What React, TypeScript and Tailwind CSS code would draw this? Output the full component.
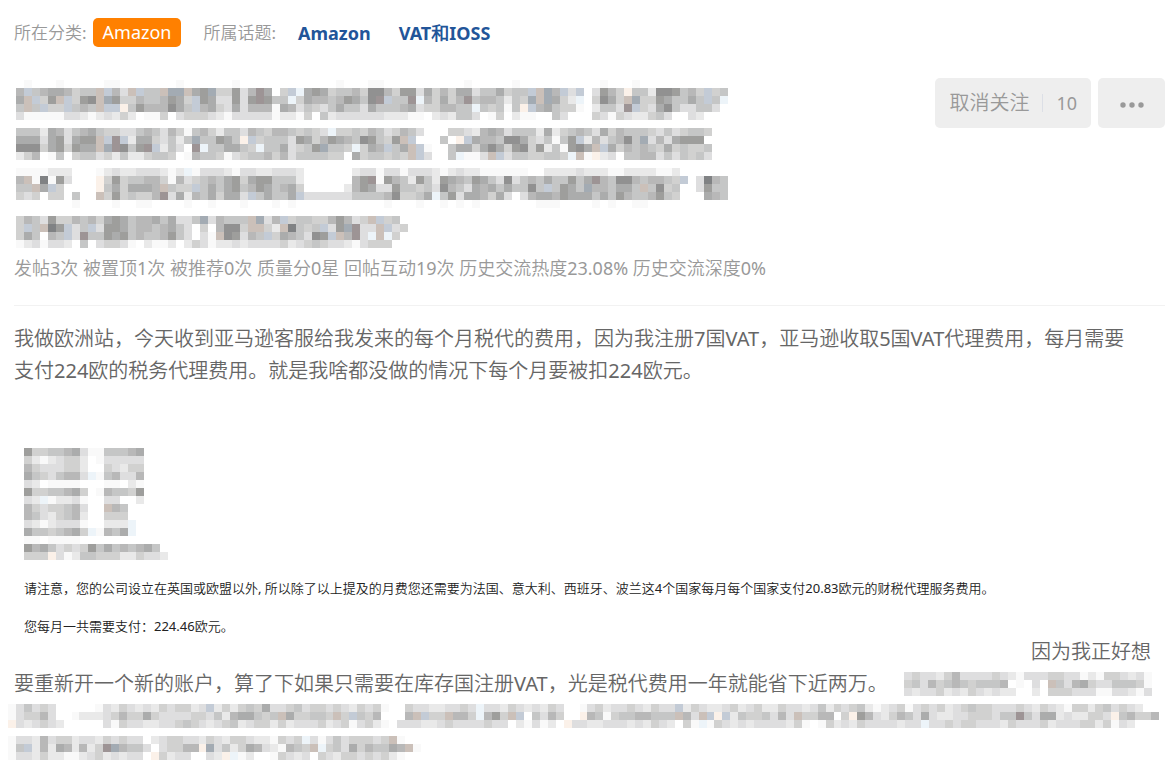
import React from "react";

// One character per 8px cell, "." leaves the cell empty
const TONES: Record<string, string> = {
  "0": "#808284",
  "1": "#919191",
  "2": "#9e9e9c",
  "3": "#abacac",
  "4": "#b8b8b8",
  "5": "#c5c6c6",
  "6": "#d1d1d0",
  "7": "#dededf",
  "8": "#e9e9e9",
  "9": "#f9f9f9",
  b: "#c3cbd6",
  B: "#a3abb3",
  r: "#cbc0b9",
  R: "#9d9495",
  c: "#edf4f9",
  w: "#fbf1e9",
};

const TITLE_ROWS = [
  ".9...9.....99.......9......9............9...99..........9.....9..........9...9",
  "4b54334655rb47rb55rBBr32B66274R3.6bc3236554611462273646337553655brB4b7b.7246w558112546b65",
  "3rb62rb621rB2664554236b2377272R255c6344542351Rb55Rc46364R5445856BrB368c.6136rB66235535b5c",
  "5r5b66b545rbbw52444135b4367374449347567535573555437664455c56595wb435669.8557Rb6731577557",
  "799999778987868.996.76667897777798896.5877777788899.878557.96.899..57...679678865 7..78",
  "",
  "555834754356677545746954685574564456567c66564576457...66784347555838654573645556757655 6",
  "3337327322rbRb83367585B55235wb655572364234512562rb...5.wb3445113675952b8475415B7473222",
  "1116326233rBR152Rb857.Rc553356c5537652B556c634b53rb9..533631362162859213rb3645456365665",
  "864.95.65576858865 56.94556976554647555566.3655656rb7..5c997rb75566556cr9w87.55447575657",
  "",
  "9999888...98788777898c97778977887778......8779779777898788999999..88887888998888998",
  "4r90927...w6265544694765453263225558......42R92458258234523571754535 5253R4511454456b.7045",
  "55r3b6....w5363334r566b5353254235436.....842377255657145734353551 5b5235B445335r5165..7255",
  "676.66.5..r6265664R7384536337b5355 3b7777775555416653c527334637.7433423335352455425 6...345",
  ".......9....9..99....9..9...9...9.9...........9...9..9.9.9.......999....9.9..99",
  "",
  "64572664546323544353775B74555rB74b6556642476rb65",
  "6b5r02b75b722354454357.6.4116rr68r0565b72BR77rb76",
  "635.45b7R5523254554257.79r12745b6345712br4R7crc6",
  "9879778.5.76679.8998.8679887877776876567789766 6",
];

const STATEMENT_ROWS = [
  "266554379955543",
  "68987668.977777",
  "46777668..67866",
  "35675447c954774",
  "78.9999...99.89",
  "26655436.945562",
  "78c98879..77..8",
  "46766547..r45",
  "45786548..666",
  "78987779..888c",
  "35565436c9453c",
  "99.9999",
  "24357676253545435",
  "666w79855666886778",
];

const ASIDE_ROWS = [
  "7677864777767897776677989667879",
  "6574654565554.9.7.r574367755569",
  "78776878678788..8.6667779977897",
];

const CLOSING_ROWS = [
  "975767.....97867878676687b8686563776576676786769..677887767c7786787867..97687767867 7b8678876876886778758676589876976768765667776786789668657678",
  "976647..98887646636777766758433565r36655 6r6b564...4rb66r446c426rb.5746..w4596554455 5r47rbwb85665747r6644.6w247864573788776667 55R57338788667w54664",
  "w787678.....7967788776567876587668687776876976 89.77788767777677.8979 8.w7788777878678.69c9678787777869.9687867777877c7767667778677768777668 6978",
  "",
  "97784766877867677.8766778678667889676c7975766676r9",
  "95b848348486RB4557.7664 4wB758634789456rc6573645534r9",
  "97786889987687877.w6877..78wc98..96787.67866767689",
];

const CELL = 8;

type MosaicProps = {
  rows: string[];
  label: string;
  className?: string;
};

function Mosaic({ rows, label, className = "" }: MosaicProps) {
  const cells = rows.map((row) => row.replace(/ /g, "").split(""));
  const width = Math.max(...cells.map((row) => row.length)) * CELL;
  const height = cells.length * CELL;

  return (
    <svg
      role="img"
      aria-label={label}
      width={width}
      height={height}
      viewBox={`0 0 ${width} ${height}`}
      shapeRendering="crispEdges"
      className={`block h-auto max-w-full ${className}`}
    >
      {cells.map((row, y) =>
        row.map((tone, x) =>
          tone === "." ? null : (
            <rect
              key={`${x}-${y}`}
              x={x * CELL}
              y={y * CELL}
              width={CELL}
              height={CELL}
              fill={TONES[tone]}
            />
          )
        )
      )}
    </svg>
  );
}

function TopicBar() {
  return (
    <nav className="flex flex-wrap items-center text-lg leading-7 text-[#999]">
      <span className="text-[17px]">所在分类:</span>
      <a
        href="#amazon"
        className="ml-[6px] rounded-[5px] bg-[#ff8000] px-[10px] pb-px text-white"
      >
        Amazon
      </a>
      <span className="ml-[22px] text-[17px]">所属话题:</span>
      <a href="#topic-amazon" className="ml-[22px] font-bold text-[#225599]">
        Amazon
      </a>
      <a href="#topic-vat" className="ml-7 font-bold text-[#225599]">
        VAT和IOSS
      </a>
    </nav>
  );
}

function PostActions() {
  return (
    <div className="flex shrink-0 gap-[7px] text-[#999]">
      <button
        type="button"
        className="flex h-[50px] items-center rounded-[5px] bg-[#eee] px-[14px] text-xl"
      >
        取消关注
        <span className="mx-[13px] h-[18px] w-px bg-[#dcdfe6]" />
        <span className="text-lg">10</span>
      </button>
      <button
        type="button"
        aria-label="更多"
        className="flex h-[50px] w-[67px] items-center justify-center rounded-[5px] bg-[#eee] pt-1"
      >
        <svg width="24" height="6" viewBox="0 0 24 6" fill="currentColor">
          <circle cx="3" cy="3" r="2.7" />
          <circle cx="12" cy="3" r="2.7" />
          <circle cx="21" cy="3" r="2.7" />
        </svg>
      </button>
    </div>
  );
}

export default function App() {
  return (
    <main className="bg-white pt-[18px] pr-[11px] pb-3 pl-[14px] font-['Noto_Sans','Noto_Sans_CJK_SC_DemiLight','Noto_Sans_CJK_SC',sans-serif]">
      <TopicBar />

      {/* Title */}
      <header className="mt-[31px] border-b border-[#f2f2f2] pb-[25px]">
        <div className="flex items-start justify-between gap-4">
          <h1 className="min-w-0 pt-[2px] pl-[2px]">
            <Mosaic rows={TITLE_ROWS} label="标题已打码" />
          </h1>
          <PostActions />
        </div>
        <p className="mt-2 text-lg leading-6 text-[#999]">
          发帖3次 被置顶1次 被推荐0次 质量分0星 回帖互动19次
          历史交流热度23.08% 历史交流深度0%
        </p>
      </header>

      {/* Post body */}
      <article className="pt-[17px] text-xl leading-8 text-[#666]">
        <p className="pr-7">
          我做欧洲站，今天收到亚马逊客服给我发来的每个月税代的费用，因为我注册7国VAT，亚马逊收取5国VAT代理费用，每月需要支付224欧的税务代理费用。就是我啥都没做的情况下每个月要被扣224欧元。
        </p>

        <div className="mt-[61px] flex items-end justify-between pr-[14px]">
          <div className="pb-[34px] pl-[10px] text-[13px] leading-4 text-[#222]">
            <Mosaic rows={STATEMENT_ROWS} label="费用明细已打码" />
            <p className="mt-5">
              请注意，您的公司设立在英国或欧盟以外, 所以除了以上提及的月费您还需要为法国、意大利、西班牙、波兰这4个国家每月每个国家支付20.83欧元的财税代理服务费用。
            </p>
            <p className="mt-[22px]">您每月一共需要支付：224.46欧元。</p>
          </div>
          <span className="shrink-0">因为我正好想</span>
        </div>

        <div className="flex flex-wrap items-center">
          <span>
            要重新开一个新的账户，算了下如果只需要在库存国注册VAT，光是税代费用一年就能省下近两万。
          </span>
          <Mosaic rows={ASIDE_ROWS} label="内容已打码" className="ml-4" />
        </div>
        <Mosaic rows={CLOSING_ROWS} label="内容已打码" className="mt-1 -ml-[6px]" />
      </article>
    </main>
  );
}
